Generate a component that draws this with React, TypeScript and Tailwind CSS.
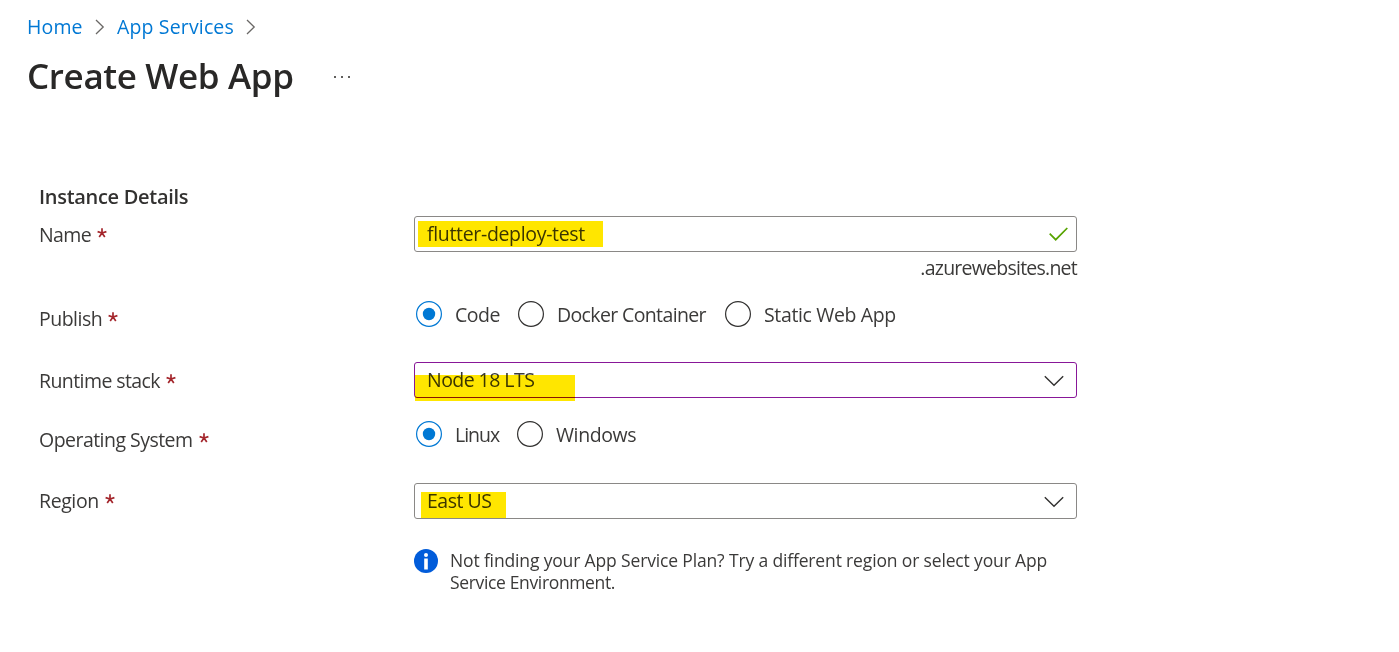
import type { ReactNode } from "react";

function BreadcrumbArrow() {
  return (
    <svg width="10" height="16" viewBox="0 0 10 16" fill="none" stroke="#6a6866" strokeWidth="1.3">
      <path d="M1 1 8.2 8 1 15" />
    </svg>
  );
}

function ChevronDown() {
  return (
    <svg className="mr-[12px] mt-px shrink-0" width="20" height="12" viewBox="0 0 20 12" fill="none" stroke="#323130" strokeWidth="1.4">
      <path d="M0.8 1.2 10 10.2 19.2 1.2" />
    </svg>
  );
}

function Label({ className, children }: { className: string; children: ReactNode }) {
  return (
    <div className="flex h-7 w-[375px] shrink-0 items-center gap-[6px] whitespace-nowrap">
      <span className={className}>{children}</span>
      <svg className="mb-[4px]" width="10" height="10" viewBox="0 0 10 10" stroke="#a4262c" strokeWidth="1.7">
        <path d="M5 5V0.3M5 5 9.4 3.6M5 5 7.8 9M5 5 2.2 9M5 5 0.6 3.6" />
      </svg>
    </div>
  );
}

function Radio({ checked = false, className, children }: { checked?: boolean; className: string; children: ReactNode }) {
  return (
    <label className="flex h-[26px] items-center gap-[13px] whitespace-nowrap">
      <svg className="shrink-0" width="26" height="26" viewBox="0 0 26 26" fill="none">
        <circle cx="13" cy="13" r="12.4" stroke={checked ? "#0078d4" : "#323130"} strokeWidth="1.2" />
        {checked && <circle cx="13" cy="13" r="6.2" fill="#0078d4" />}
      </svg>
      <span className={className}>{children}</span>
    </label>
  );
}

export default function App() {
  return (
    <main className="h-[652px] w-[1399px] overflow-hidden bg-white font-['Open_Sans','Noto_Sans',sans-serif] text-[19.5px] leading-7 text-[#3b3a39]">
      <nav className="flex h-[52px] items-center pl-[27px] pt-px text-[19.5px] tracking-[0.15px] text-[#0078d4]">
        <span className="w-[68px]">Home</span>
        <BreadcrumbArrow />
        <span className="ml-[12px] w-[129px] whitespace-nowrap">App Services</span>
        <BreadcrumbArrow />
      </nav>
      <header className="flex h-[50px] items-center pl-[27px]">
        <h1 className="-mt-[2px] w-[307px] whitespace-nowrap text-[35px] font-semibold leading-[50px] tracking-[-0.36px] text-[#292827]">Create Web App</h1>
        <div className="flex gap-[5px]">
          <i className="size-[2px] bg-[#605e5c]" />
          <i className="size-[2px] bg-[#605e5c]" />
          <i className="size-[2px] bg-[#605e5c]" />
        </div>
      </header>

      <form className="flex flex-col pl-[39px] pt-[81px]">
        <h2 className="h-[33px] text-[20px] font-semibold leading-7 tracking-[-0.3px] text-[#323130]">Instance Details</h2>

        <div className="flex h-[36px]">
          <div className="pt-[5px]"><Label className="tracking-[-0.6px]">Name</Label></div>
          <div className="flex h-[36px] w-[663px] items-center justify-between rounded-[3px] border border-[#8a8886]">
            <div className="ml-[3px] h-[26px] w-[185px] whitespace-nowrap bg-[#ffe600] pl-[9px] leading-[26px] tracking-[-0.33px] text-[#3b3500]">flutter-deploy-test</div>
            <svg className="mr-[8px]" width="19" height="14" viewBox="0 0 19 14" fill="none" stroke="#57a300" strokeWidth="1.7">
              <path d="M0.7 6.7 6.7 12.7 18.3 1" />
            </svg>
          </div>
        </div>
        <div className="h-[48px] w-[1038px] pt-[2px] text-right tracking-[-0.76px]">.azurewebsites.net</div>

        <div className="flex h-[62px] pt-[5px]">
          <Label className="tracking-[-0.5px]">Publish</Label>
          <div className="-mt-[4px] flex h-[26px] pl-[2px]">
            <div className="w-[102px]"><Radio checked className="pt-px tracking-[-0.5px]">Code</Radio></div>
            <div className="w-[207px]"><Radio className="pt-px tracking-[-0.63px]">Docker Container</Radio></div>
            <Radio className="pt-px tracking-[-0.36px]">Static Web App</Radio>
          </div>
        </div>

        <div className="flex h-[59px]">
          <div className="pt-[5px]"><Label className="tracking-[-0.58px]">Runtime stack</Label></div>
          <div className="relative flex h-[36px] w-[663px] items-center justify-between rounded-[3px] border border-[#881798]">
            <div className="absolute left-0 top-[12px] h-[26px] w-[160px] bg-[#ffe600] mix-blend-multiply" />
            <span className="pl-[12px] tracking-[-0.55px]">Node 18 LTS</span>
            <ChevronDown />
          </div>
        </div>

        <div className="flex h-[62px] pt-[5px]">
          <Label className="tracking-[-0.53px]">Operating System</Label>
          <div className="-mt-[5px] flex h-[26px] pl-[2px]">
            <div className="w-[101px]"><Radio checked className="pt-px tracking-[-1px]">Linux</Radio></div>
            <Radio className="pt-px tracking-[-0.4px]">Windows</Radio>
          </div>
        </div>

        <div className="flex h-[66px]">
          <div className="pt-[4px]"><Label className="tracking-[-0.4px]">Region</Label></div>
          <div className="relative flex h-[36px] w-[663px] items-center justify-between rounded-[3px] border border-[#8a8886]">
            <div className="absolute left-[6px] top-[8px] h-[26px] w-[85px] bg-[#ffe600] mix-blend-multiply" />
            <span className="pl-[12px] tracking-[-0.5px]">East US</span>
            <ChevronDown />
          </div>
        </div>

        <div className="ml-[375px] flex gap-[12px]">
          <svg className="shrink-0" width="24" height="24" viewBox="0 0 24 24">
            <circle cx="12" cy="12" r="12" fill="#015cda" />
            <circle cx="12" cy="6" r="2" fill="#fff" />
            <rect x="10.2" y="9.5" width="3.6" height="11" fill="#fff" />
          </svg>
          <p className="text-[17.5px] leading-[22px]">
            <span className="block whitespace-nowrap tracking-[-0.15px]">Not finding your App Service Plan? Try a different region or select your App</span>
            <span className="block whitespace-nowrap tracking-[-0.35px]">Service Environment.</span>
          </p>
        </div>
      </form>
    </main>
  );
}
